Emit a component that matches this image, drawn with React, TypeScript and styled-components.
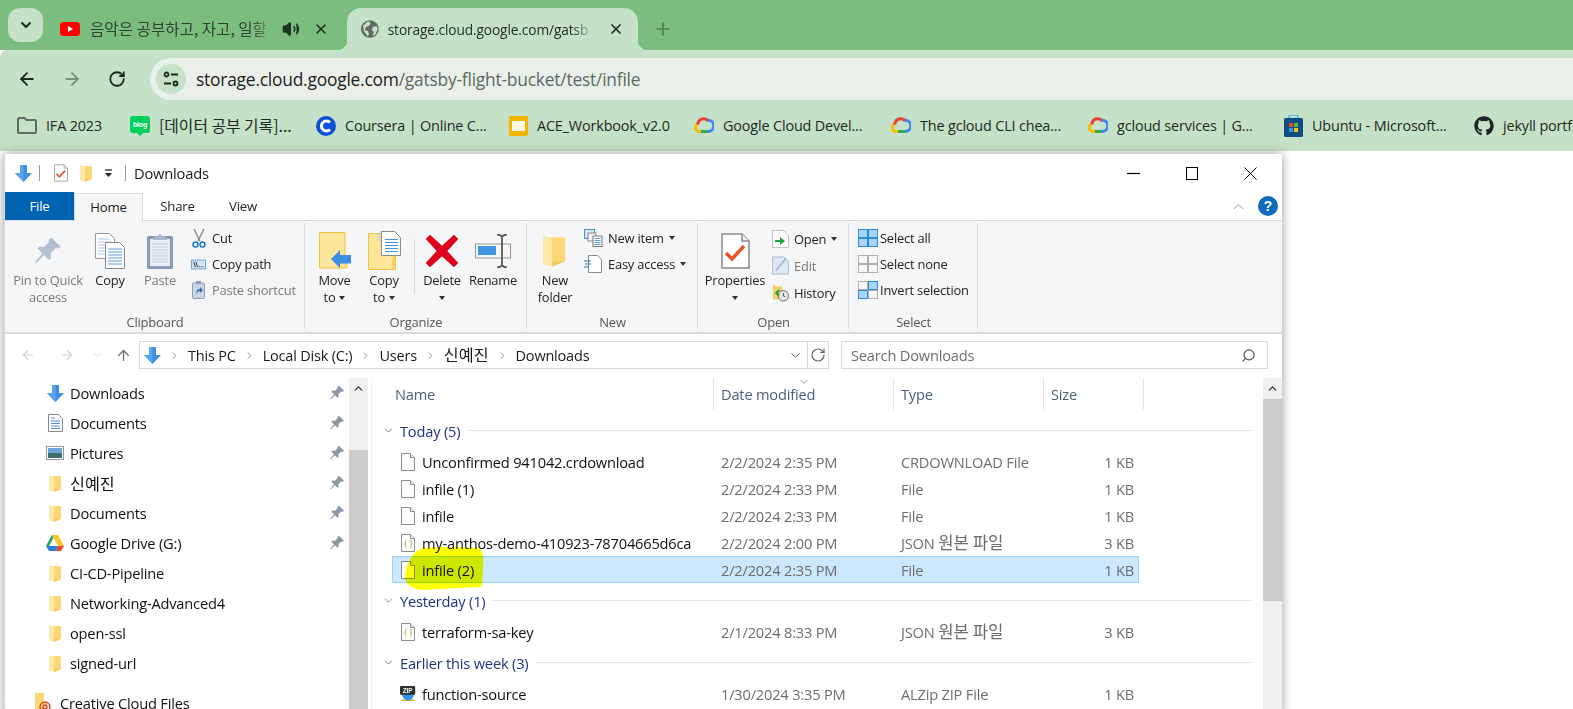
import React from "react";
import styled, { createGlobalStyle } from "styled-components";
import { ArrowLeft, ArrowRight, RotateCw, X, Plus, ChevronDown, ChevronUp, ChevronRight, ArrowUp, Volume2, Search } from "lucide-react";
import { FaGithub } from "react-icons/fa";

const UI = `"Open Sans", "Noto Sans CJK KR", sans-serif`;

const Global = createGlobalStyle`
  html, body { margin: 0; padding: 0; background: #fff; }
  body { font-family: ${UI}; overflow: hidden; }
  * { box-sizing: border-box; }
`;

const Page = styled.div`
  width: 1573px;
  height: 709px;
  overflow: hidden;
  background: #fff;
`;

const Cjk = styled.span<{ $size?: number }>`
  font-family: "Noto Sans CJK KR", sans-serif;
  font-size: ${(p) => p.$size ?? 16}px;
  letter-spacing: 0;
  line-height: 1;
`;

/* ---------- browser chrome ---------- */
const TabStrip = styled.div`
  height: 50px;
  background: #7bbc7f;
  display: flex;
  align-items: flex-end;
  padding-left: 8px;
`;
const TabSearch = styled.div`
  width: 35px;
  height: 34px;
  margin-bottom: 8px;
  background: #c5e1c7;
  border-radius: 12px;
  display: flex;
  align-items: center;
  justify-content: center;
  color: #1c2a1d;
`;
const InactiveTab = styled.div`
  width: 304px;
  height: 42px;
  padding: 0 18px 0 17px;
  display: flex;
  align-items: center;
  color: #1f3421;
`;
const ActiveTab = styled.div`
  position: relative;
  width: 291px;
  height: 42px;
  padding: 0 14px;
  display: flex;
  align-items: center;
  background: #c5e1c7;
  border-radius: 14px 14px 0 0;
  color: #1f2b20;
  &::before, &::after {
    content: "";
    position: absolute;
    bottom: 0;
    width: 10px;
    height: 10px;
  }
  &::before { left: -10px; background: radial-gradient(circle at 0 0, transparent 10px, #c5e1c7 10.5px); }
  &::after { right: -10px; background: radial-gradient(circle at 100% 0, transparent 10px, #c5e1c7 10.5px); }
`;
const TabTitle = styled.span<{ $w: number; $ml: number; $dim?: boolean }>`
  width: ${(p) => p.$w}px;
  margin-left: ${(p) => p.$ml}px;
  overflow: hidden;
  white-space: nowrap;
  font-size: 13.7px;
  letter-spacing: -0.1px;
  color: ${(p) => (p.$dim ? "#2f4331" : "#1f2b20")};
  -webkit-mask-image: linear-gradient(to right, #000 88%, transparent);
  mask-image: linear-gradient(to right, #000 88%, transparent);
`;
const TabAction = styled.span<{ $ml: number }>`
  display: flex;
  margin-left: ${(p) => p.$ml}px;
`;
const NewTab = styled.span`
  height: 42px;
  margin-left: 15px;
  display: flex;
  align-items: center;
  color: #4f7d52;
`;
const Toolbar = styled.div`
  position: relative;
  height: 50px;
  background: #c5e1c7;
  border-radius: 8px 0 0 0;
  display: flex;
  padding-top: 8px;
`;
const ToolButton = styled.span<{ $w: number; $dim?: boolean }>`
  width: ${(p) => p.$w}px;
  height: 42px;
  display: flex;
  align-items: center;
  justify-content: center;
  color: ${(p) => (p.$dim ? "#7d917e" : "#1c2a1d")};
`;
const Omnibox = styled.div`
  flex: 1;
  height: 42px;
  margin-left: 6px;
  background: #e9f0e9;
  border-radius: 21px 0 0 21px;
  display: flex;
  align-items: center;
  padding-left: 6px;
`;
const TuneChip = styled.span`
  width: 30px;
  height: 30px;
  border-radius: 50%;
  background: #c5e1c7;
  display: flex;
  align-items: center;
  justify-content: center;
`;
const Url = styled.span`
  margin-left: 10px;
  font-size: 17.4px;
  letter-spacing: -0.22px;
  color: #5c6b5d;
  white-space: nowrap;
`;
const UrlHost = styled.span`
  color: #1a241b;
`;
const BookmarkBar = styled.div`
  height: 51px;
  background: #c5e1c7;
  display: flex;
  align-items: center;
  padding-left: 17px;
  overflow: hidden;
`;
const Bookmark = styled.div<{ $w: number }>`
  flex: 0 0 ${(p) => p.$w}px;
  display: flex;
  align-items: center;
  gap: 9px;
  font-size: 14.4px;
  letter-spacing: -0.15px;
  color: #1c2a1d;
  white-space: nowrap;
`;
const BookmarkIcon = styled.span`
  flex: 0 0 20px;
  height: 20px;
  display: flex;
  align-items: center;
  justify-content: center;
`;

/* ---------- explorer window ---------- */
const Window = styled.div`
  position: relative;
  z-index: 1;
  margin: 3px 0 0 4px;
  width: 1278px;
  height: 560px;
  background: #fff;
  border-left: 1px solid #dcdcdc;
  box-shadow: 0 0 10px rgba(0, 0, 0, 0.4);
  display: flex;
  flex-direction: column;
  font-size: 14.65px;
  letter-spacing: -0.2px;
`;
const TitleBar = styled.div`
  height: 38px;
  display: flex;
  align-items: center;
  padding-left: 10px;
`;
const TitleSlot = styled.span<{ $w: number }>`
  flex: 0 0 ${(p) => p.$w}px;
  display: flex;
  align-items: center;
`;
const TitleSep = styled.span<{ $ml: number; $mr: number }>`
  width: 1px;
  height: 16px;
  background: #9a9a9a;
  margin: 0 ${(p) => p.$mr}px 0 ${(p) => p.$ml}px;
`;
const TitleText = styled.span`
  font-size: 14.7px;
  color: #1a1a1a;
`;
const WindowControls = styled.div`
  margin-left: auto;
  display: flex;
  align-items: center;
  padding-right: 25px;
  gap: 46px;
`;
const TabRow = styled.div`
  height: 28px;
  display: flex;
  align-items: stretch;
  position: relative;
`;
const FileTab = styled.div`
  width: 69px;
  background: #0063b1;
  color: #fff;
  display: flex;
  align-items: center;
  justify-content: center;
  font-size: 13.2px;
`;
const RibbonTab = styled.div<{ $active?: boolean; $w: number }>`
  width: ${(p) => p.$w}px;
  padding-bottom: 2px;
  display: flex;
  align-items: center;
  justify-content: center;
  font-size: 13.2px;
  color: #222;
  background: ${(p) => (p.$active ? "#f5f6f7" : "transparent")};
  border: 1px solid ${(p) => (p.$active ? "#dadbdc" : "transparent")};
  border-bottom: none;
  position: relative;
  top: ${(p) => (p.$active ? "1px" : "0")};
`;
const RibbonHelp = styled.div`
  margin-left: auto;
  display: flex;
  align-items: center;
  gap: 11px;
  padding-right: 4px;
`;
const Ribbon = styled.div`
  height: 114px;
  background: #f5f6f7;
  border-top: 1px solid #dadbdc;
  border-bottom: 2px solid #dadbdc;
  display: flex;
`;
const Group = styled.div<{ $w: number }>`
  width: ${(p) => p.$w}px;
  display: flex;
  flex-direction: column;
  position: relative;
  &::after {
    content: "";
    position: absolute;
    right: 0;
    top: 2px;
    bottom: 3px;
    width: 1px;
    background: #dadbdc;
  }
`;
const GroupBody = styled.div`
  flex: 1;
  display: flex;
`;
const GroupLabel = styled.div`
  height: 22px;
  line-height: 24px;
  text-align: center;
  font-size: 13px;
  color: #575757;
`;
const LargeButton = styled.div<{ $w: number; $dim?: boolean }>`
  width: ${(p) => p.$w}px;
  padding-top: 8px;
  display: flex;
  flex-direction: column;
  align-items: center;
  font-size: 12.9px;
  color: ${(p) => (p.$dim ? "#7a7a7a" : "#222")};
`;
const LargeIcon = styled.div`
  height: 43px;
  display: flex;
  align-items: center;
  justify-content: center;
`;
const LargeLine = styled.div`
  height: 17px;
  line-height: 17px;
  white-space: nowrap;
  display: flex;
  align-items: center;
  gap: 4px;
`;
const Caret = styled.span`
  display: inline-block;
  width: 0;
  height: 0;
  border-left: 3.5px solid transparent;
  border-right: 3.5px solid transparent;
  border-top: 4px solid #333;
`;
const GroupDivider = styled.div`
  width: 1px;
  margin: 18px 0 16px 10px;
  background: #dadbdc;
`;
const SmallColumn = styled.div<{ $pl?: number }>`
  padding: 4px 0 0 ${(p) => p.$pl ?? 0}px;
  display: flex;
  flex-direction: column;
`;
const SmallRow = styled.div<{ $h?: number; $dim?: boolean; $gap?: number }>`
  height: ${(p) => p.$h ?? 26}px;
  display: flex;
  align-items: center;
  gap: ${(p) => p.$gap ?? 5}px;
  font-size: 12.9px;
  white-space: nowrap;
  color: ${(p) => (p.$dim ? "#7a7a7a" : "#222")};
`;
const SmallIcon = styled.span<{ $w: number }>`
  flex: 0 0 ${(p) => p.$w}px;
  min-width: 0;
  display: flex;
  justify-content: center;
  align-items: center;
`;

/* ---------- address row ---------- */
const AddressRow = styled.div`
  height: 44px;
  flex: none;
  padding-top: 7px;
  display: flex;
  align-items: flex-start;
`;
const NavArrow = styled.span<{ $w: number; $color: string }>`
  width: ${(p) => p.$w}px;
  height: 28px;
  display: flex;
  align-items: center;
  justify-content: center;
  color: ${(p) => p.$color};
`;
const AddressBox = styled.div`
  width: 690px;
  height: 28px;
  margin-left: 4px;
  border: 1px solid #d9d9d9;
  display: flex;
  align-items: center;
  padding-left: 4px;
  gap: 8px;
  font-size: 14.5px;
  color: #1a1a1a;
`;
const AddressEnd = styled.div`
  margin-left: auto;
  display: flex;
  align-items: center;
  height: 100%;
  color: #666;
`;
const RefreshSlot = styled.span`
  width: 21px;
  height: 100%;
  margin-left: 4px;
  border-left: 1px solid #d9d9d9;
  display: flex;
  align-items: center;
  justify-content: center;
`;
const SearchBox = styled.div`
  width: 427px;
  height: 28px;
  margin-left: 12px;
  border: 1px solid #d9d9d9;
  display: flex;
  align-items: center;
  justify-content: space-between;
  padding: 0 11px 0 9px;
  font-size: 14.65px;
  color: #6d6d6d;
`;

/* ---------- main ---------- */
const Main = styled.div`
  flex: 1;
  display: flex;
  min-height: 0;
`;
const NavPane = styled.div`
  width: 344px;
  display: flex;
  flex-direction: column;
`;
const NavRow = styled.div<{ $outer?: boolean }>`
  flex: none;
  height: 30px;
  margin-top: ${(p) => (p.$outer ? "10px" : "0")};
  padding-left: ${(p) => (p.$outer ? "29px" : "38px")};
  display: flex;
  align-items: center;
  color: #111;
  white-space: nowrap;
`;
const NavIcon = styled.span<{ $outer?: boolean }>`
  flex: 0 0 ${(p) => (p.$outer ? "20px" : "24px")};
  margin-right: ${(p) => (p.$outer ? "6px" : "3px")};
  display: flex;
  align-items: center;
  justify-content: center;
`;
const PinSlot = styled.span`
  margin-left: auto;
  flex: 0 0 19px;
  display: flex;
`;
const Scrollbar = styled.div<{ $thumbTop: number; $thumbH: number }>`
  position: relative;
  flex: none;
  width: 19px;
  background: #f0f0f0;
  display: flex;
  justify-content: center;
  padding-top: 4px;
  color: #333;
  &::after {
    content: "";
    position: absolute;
    left: 0;
    right: 0;
    top: ${(p) => p.$thumbTop}px;
    height: ${(p) => p.$thumbH}px;
    background: #cdcdcd;
  }
`;
const ListPane = styled.div`
  position: relative;
  flex: 1;
  margin-left: 3px;
  border-left: 1px solid #f0f0f0;
`;
const HeaderRow = styled.div`
  height: 32px;
  display: flex;
`;
const HeaderCell = styled.div<{ $w: number; $pl: number }>`
  position: relative;
  width: ${(p) => p.$w}px;
  padding-left: ${(p) => p.$pl}px;
  border-right: 1px solid #e5e5e5;
  display: flex;
  align-items: center;
  color: #4c607a;
`;
const SortChevron = styled.span`
  position: absolute;
  left: 84px;
  top: -2px;
  display: flex;
  color: #777;
`;
const Groups = styled.div`
  padding-top: 3px;
`;
const GroupHeader = styled.div`
  height: 30px;
  margin: 2.5px 0 2.5px 10px;
  width: 869px;
  display: flex;
  align-items: center;
  color: #1e3287;
`;
const GroupChevron = styled.span`
  flex: 0 0 18px;
  display: flex;
  color: #666;
`;
const GroupRule = styled.span`
  flex: 1;
  height: 1px;
  margin-left: 8px;
  background: #e3e3e3;
`;
const FileRow = styled.div<{ $selected?: boolean }>`
  height: 27px;
  margin-left: 20px;
  width: 747px;
  display: grid;
  grid-template-columns: 328px 180px 140px 97px;
  align-items: center;
  background: ${(p) => (p.$selected ? "#cce8ff" : "transparent")};
  border: 1px solid ${(p) => (p.$selected ? "#99d1ff" : "transparent")};
`;
const NameCell = styled.div`
  display: flex;
  align-items: center;
  color: #111;
  white-space: nowrap;
`;
const FileIconSlot = styled.span`
  flex: 0 0 16px;
  min-width: 0;
  margin: 0 6px 0 7px;
  display: flex;
  justify-content: center;
`;
const MutedCell = styled.div`
  color: #6d6d6d;
  white-space: nowrap;
`;
const SizeCell = styled(MutedCell)`
  text-align: right;
  padding-right: 4px;
`;
const Highlight = styled.svg`
  position: absolute;
  left: 33px;
  top: 169px;
  mix-blend-mode: multiply;
  pointer-events: none;
`;

/* ---------- drawn icons ---------- */
const BlueDown = ({ s = 17 }: { s?: number }) => (
  <svg width={s} height={s} viewBox="0 0 17 17">
    <path d="M5 0h7v8h5l-8.5 9L0 8h5z" fill="#3a8fe3" />
    <path d="M5 0h3.500v17L0 8h5z" fill="#5aa6ee" />
  </svg>
);
const QuickFolder = ({ s = 13, h = 17 }: { s?: number; h?: number }) => (
  <svg width={s} height={h} viewBox="0 0 13 17">
    <path d="M4 1h7l1 1v12H4z" fill="#fcd778" />
    <path d="M0 0l5 2v15l-5-1.500z" fill="#fde9a9" />
    <path d="M5 2v15l7-3H5" fill="#f5c553" />
  </svg>
);
const CheckDoc = ({ w = 14, h = 18 }: { w?: number; h?: number }) => (
  <svg width={w} height={h} viewBox="0 0 29 36">
    <path d="M1 1h20l7 7v27H1z" fill="#fff" stroke="#8a8a8a" strokeWidth="1.500" />
    <path d="M21 1v7h7" fill="#eee" stroke="#8a8a8a" strokeWidth="1.500" />
    <path d="M5 20l6 6L23 13" fill="none" stroke="#e8562a" strokeWidth="3.500" />
  </svg>
);
const Page14 = () => (
  <svg width="14" height="18" viewBox="0 0 14 18">
    <path d="M.5.500h9l4 4v13H.5z" fill="#fdfdfd" stroke="#8d8d8d" />
    <path d="M9.500.5v4h4" fill="#f0f0f0" stroke="#8d8d8d" />
  </svg>
);
const JsonPage = () => (
  <svg width="14" height="18" viewBox="0 0 14 18">
    <path d="M.5.500h9l4 4v13H.5z" fill="#fdfdfd" stroke="#8d8d8d" />
    <path d="M9.500.5v4h4" fill="#f0f0f0" stroke="#8d8d8d" />
    <path d="M5.500 6C4 6 4.500 8 4.500 9S4 10 3.500 10C4 10 4.500 10 4.500 11s-.5 2.500 1 2.500M9 6c1.500 0 1 2 1 3s.5 1 1 1c-.5 0-1 0-1 1s.5 2.500-1 2.500" fill="none" stroke="#b3b552" strokeWidth="1" />
  </svg>
);
const ZipIcon = () => (
  <svg width="20" height="19" viewBox="0 0 20 19">
    <path d="M3 17l-2 2h18l-2-2z" fill="#d9a93a" />
    <path d="M2.500 9C2.500 14 5 18 10 18s7.500-4 7.500-9z" fill="#2f8fe6" />
    <rect x="0" y="0" width="19" height="11" rx="1.500" fill="#303030" />
    <text x="9.500" y="8.500" fontSize="8" fontWeight="700" textAnchor="middle" fill="#fff" fontFamily="Liberation Sans, sans-serif">ZIP</text>
  </svg>
);
const Pin = ({ s = 15, c = "#8c97a6" }: { s?: number; c?: string }) => (
  <svg width={s} height={s} viewBox="0 0 26 26">
    <path d="M17 0l9 9-2.500 1.500-2.500-.5-5.500 5.500.5 4.500-2 2-5-5L1 25l-1-1 7.500-8.500-5-5 2-2 4.500.5L14 4l-.5-2.500z" fill={c} />
  </svg>
);
const Copy2 = () => (
  <svg width="30" height="36" viewBox="0 0 30 36">
    <path d="M.5.500h14l5 5v20H.5z" fill="#fff" stroke="#9a9a9a" />
    <path d="M3 6h11M3 9h13M3 12h13M3 15h13M3 18h13M3 21h13" stroke="#a8c8ee" />
    <path d="M10.500 9.500h14l5 5v21h-19z" fill="#fff" stroke="#8a8a8a" />
    <path d="M13 16h14M13 19h14M13 22h14M13 25h14M13 28h14M13 31h14" stroke="#5a9ae0" />
  </svg>
);
const Clipboard = () => (
  <svg width="26" height="37" viewBox="0 0 26 37">
    <rect x="0" y="4" width="26" height="33" rx="1.500" fill="#8b9cba" />
    <rect x="3" y="7" width="20" height="27" fill="#e9eef6" />
    <path d="M5 12h16M5 15h16M5 18h16M5 21h16M5 24h16M5 27h16M5 30h16" stroke="#c3cfe2" />
    <path d="M6 7l3-3h2.500a1.500 2 0 0 1 3 0H17l3 3v1H6z" fill="#aab6c9" />
  </svg>
);
const Scissors = () => (
  <svg width="14" height="19" viewBox="0 0 14 19">
    <path d="M2 0l6 12M12 0L6 12" stroke="#8a8a8a" strokeWidth="1.400" fill="none" />
    <circle cx="3.500" cy="15.500" r="2.500" fill="none" stroke="#1e78c8" strokeWidth="1.500" />
    <circle cx="10.500" cy="15.500" r="2.500" fill="none" stroke="#1e78c8" strokeWidth="1.500" />
  </svg>
);
const CopyPath = () => (
  <svg width="17" height="11" viewBox="0 0 17 11">
    <rect x="0.500" y="0.500" width="16" height="10" fill="#cfe3f7" stroke="#6f9bc9" />
    <path d="M3 2.500l2 6M5.500 2.500l2 6" stroke="#222" fill="none" />
    <path d="M9 8h1M11 8h1M13 8h1" stroke="#222" />
  </svg>
);
const PasteShortcut = () => (
  <svg width="13" height="18" viewBox="0 0 13 18">
    <rect x="0.500" y="2" width="12" height="15.500" rx="1" fill="#c9d4e4" stroke="#8d9db8" />
    <path d="M4 0h5v3H4z" fill="#8d9db8" />
    <path d="M4 13c0-4 2-5 4-5V6l3 3-3 3v-2c-2 0-3 1-4 3z" fill="#3b6fb0" />
  </svg>
);
const MoveTo = () => (
  <svg width="32" height="37" viewBox="0 0 32 37">
    <path d="M.5.500h25.500v35.500H.5z" fill="#fde59a" stroke="#efc33f" />
    <path d="M26 30h2v6h-2" fill="#fde59a" stroke="#efc33f" />
    <path d="M12 27l9-9v5h11v8.500H21V36z" fill="#3a8fe3" />
  </svg>
);
const CopyTo = () => (
  <svg width="33" height="39" viewBox="0 0 33 39">
    <path d="M.5 2.500h21v10l6 10v16H.5z" fill="#fde59a" stroke="#efc33f" />
    <path d="M25 38.500V28c0-1 2.500-4 2.500-4v14.500" fill="#fbd570" stroke="#efc33f" />
    <path d="M13.500.5h13l6 6v18h-19z" fill="#fff" stroke="#8a8a8a" />
    <path d="M9 3h4M9 6h4M9 9h4" stroke="#a8c8ee" />
    <path d="M17 8.500h13M17 11.500h13M17 14.500h13M17 17.500h13M17 20.500h13" stroke="#4a8fdc" />
  </svg>
);
const DeleteX = () => (
  <svg width="32" height="32" viewBox="0 0 32 32">
    <path d="M4 0l12 11L28 0l4 4-11 12 11 12-4 4-12-11L4 32l-4-4 11-12L0 4z" fill="#e3001b" stroke="#b5001a" strokeWidth="0.500" />
  </svg>
);
const RenameIcon = () => (
  <svg width="36" height="34" viewBox="0 0 36 34">
    <rect x="0.500" y="10" width="35" height="14" fill="#f5f6f7" stroke="#9a9a9a" />
    <rect x="3" y="12" width="18" height="9" fill="#3f95e0" />
    <path d="M22 .5c3 0 4 1 5 2 1-1 2-2 5-2M27 2v30M22 33.500c3 0 4-1 5-2 1 1 2 2 5 2" fill="none" stroke="#5c5c5c" strokeWidth="1.800" />
  </svg>
);
const NewItemIcon = () => (
  <svg width="19" height="18" viewBox="0 0 19 18">
    <rect x="0.500" y="0.500" width="10" height="9" fill="#d9e8f7" stroke="#5e8bbf" />
    <rect x="4" y="4" width="8" height="8" fill="#f4f4f4" stroke="#888" />
    <rect x="9" y="7" width="9" height="10.500" fill="#fff" stroke="#7a7a7a" />
    <path d="M10.500 9.500h6M10.500 11.500h6M10.500 13.500h6M10.500 15.500h6" stroke="#5a9ae0" />
  </svg>
);
const EasyAccess = () => (
  <svg width="18" height="18" viewBox="0 0 18 18">
    <path d="M4.500.5h9l4 4v13h-13z" fill="#fff" stroke="#8a8a8a" />
    <path d="M0 6h7M1 9h6M0 12h5" stroke="#1e78c8" strokeWidth="1.200" />
  </svg>
);
const OpenIcon = () => (
  <svg width="17" height="18" viewBox="0 0 17 18">
    <path d="M.5.500h11l5 5v12H.5z" fill="#fbfbfb" stroke="#c3c3c3" />
    <path d="M3 10h5V7l5 4-5 4v-3H3z" fill="#1fa33a" />
  </svg>
);
const EditIcon = () => (
  <svg width="18" height="19" viewBox="0 0 18 19">
    <path d="M.5.500h12l5 5v13H.5z" fill="#dfe8f3" stroke="#a8bad0" />
    <path d="M4 15L15 2" stroke="#a8bad0" strokeWidth="2" />
  </svg>
);
const HistoryIcon = () => (
  <svg width="18" height="18" viewBox="0 0 18 18">
    <path d="M1 0l4 2h6v14H1z" fill="#f5cf6b" />
    <circle cx="12" cy="12" r="5.500" fill="#e8e8e8" stroke="#666" />
    <path d="M12 9v3l2 1" stroke="#444" fill="none" />
    <path d="M7.500 6l-3 3 3 3" fill="none" stroke="#1f9a33" strokeWidth="2" />
  </svg>
);
const GridIcon = ({ mode }: { mode: "all" | "none" | "invert" }) => {
  const tone = (on: boolean) =>
    on ? { fill: "#a9d3f7", stroke: "#2b8be0" } : { fill: "#f5f6f7", stroke: "#b0b0b0" };
  const on = mode === "all" ? [1, 1, 1, 1] : mode === "none" ? [0, 0, 0, 0] : [0, 1, 1, 0];
  return (
    <svg width="20" height="18" viewBox="0 0 20 18">
      <rect x="0.500" y="0.500" width="9" height="8" {...tone(!!on[0])} />
      <rect x="10.500" y="0.500" width="9" height="8" {...tone(!!on[1])} />
      <rect x="0.500" y="9.500" width="9" height="8" {...tone(!!on[2])} />
      <rect x="10.500" y="9.500" width="9" height="8" {...tone(!!on[3])} />
    </svg>
  );
};
const HelpBadge = () => (
  <svg width="20" height="20" viewBox="0 0 20 20">
    <circle cx="10" cy="10" r="10" fill="#0f6cbd" />
    <text x="10" y="15" fontSize="14" fontWeight="700" textAnchor="middle" fill="#fff" fontFamily="Liberation Sans, sans-serif">?</text>
  </svg>
);
const DocsIcon = () => (
  <svg width="15" height="18" viewBox="0 0 15 18">
    <path d="M.5.500h10l4 4v13H.5z" fill="#fff" stroke="#888" />
    <path d="M3 4h4M3 7h9M3 9.500h9M3 12h9M3 14.500h9" stroke="#4a8fdc" />
  </svg>
);
const PicturesIcon = () => (
  <svg width="18" height="14" viewBox="0 0 18 14">
    <rect x="0.500" y="0.500" width="17" height="13" fill="#fff" stroke="#999" />
    <rect x="2" y="2" width="14" height="5" fill="#6ea8d8" />
    <rect x="2" y="7" width="14" height="5" fill="#3f6f6a" />
  </svg>
);
const DriveIcon = () => (
  <svg width="18" height="16" viewBox="0 0 18 16">
    <path d="M6 0h3l-6 11-3 0z" fill="#1fa463" />
    <path d="M6 0h6l6 11h-6z" fill="#ffc425" />
    <path d="M0 11h12l-2 5H3z" fill="#2a7de1" />
    <path d="M12 11h6l-3 5h-5z" fill="#ea4335" />
  </svg>
);
const CreativeCloud = () => (
  <svg width="18" height="20" viewBox="0 0 18 20">
    <path d="M0 0h9v9H12v10H0z" fill="#fbd877" />
    <circle cx="10" cy="14" r="5" fill="none" stroke="#e5432d" strokeWidth="1.400" />
    <circle cx="10" cy="14" r="2" fill="none" stroke="#e5432d" strokeWidth="1.400" />
  </svg>
);
const Youtube = () => (
  <svg width="20" height="14" viewBox="0 0 20 14">
    <rect width="20" height="14" rx="3.500" fill="#f00" />
    <path d="M8 4l5 3-5 3z" fill="#fff" />
  </svg>
);
const Globe = () => (
  <svg width="18" height="18" viewBox="0 0 18 18">
    <circle cx="9" cy="9" r="9" fill="#5f6b63" />
    <path d="M7 1l3 2-2 3-3 1-1 3 3 1 1 3-1 3-4-6-1-5zM12 7l4-1 1 3-2 5-3 2 1-4-2-2z" fill="#c5e1c7" />
  </svg>
);
const TuneIcon = () => (
  <svg width="16" height="16" viewBox="0 0 16 16" fill="none" stroke="#1c2a1d" strokeWidth="1.800">
    <circle cx="3.500" cy="3.500" r="2" />
    <path d="M8 3.500h7M1 12.500h7" />
    <circle cx="12.500" cy="12.500" r="2" />
  </svg>
);
const FolderOutline = () => (
  <svg width="20" height="17" viewBox="0 0 20 17" fill="none" stroke="#5f6b63" strokeWidth="2">
    <path d="M1 2.500A1.500 1.500 0 0 1 2.500 1h5l2 2h8A1.500 1.500 0 0 1 19 4.500V15a1 1 0 0 1-1 1H2a1 1 0 0 1-1-1z" />
  </svg>
);
const BlogIcon = () => (
  <svg width="20" height="20" viewBox="0 0 20 20">
    <path d="M3 0h14a3 3 0 0 1 3 3v11a3 3 0 0 1-3 3h-4l-3 3-3-3H3a3 3 0 0 1-3-3V3a3 3 0 0 1 3-3z" fill="#03cf5d" />
    <text x="10" y="11" fontSize="7" fontWeight="700" textAnchor="middle" fill="#fff" fontFamily="Liberation Sans, sans-serif">blog</text>
  </svg>
);
const CourseraIcon = () => (
  <svg width="20" height="20" viewBox="0 0 20 20">
    <circle cx="10" cy="10" r="10" fill="#0b4fd6" />
    <path d="M14 6.500A5 5 0 1 0 14 13.500" fill="none" stroke="#fff" strokeWidth="3" />
  </svg>
);
const SlidesIcon = () => (
  <svg width="19" height="20" viewBox="0 0 19 20">
    <rect width="19" height="20" rx="2" fill="#f5b400" />
    <rect x="3" y="5" width="13" height="10" fill="#fdf7e3" />
  </svg>
);
const GCloud = () => (
  <svg width="20" height="17" viewBox="0 0 20 17" fill="none" strokeWidth="3">
    <path d="M8 14.500H5.500A4 4 0 0 1 4.500 6.600" stroke="#fbbc04" />
    <path d="M3.800 7.500A6 6 0 0 1 14.500 4" stroke="#ea4335" />
    <path d="M13.800 3.300A5.500 5.500 0 0 1 14.500 14.500H13" stroke="#4285f4" />
    <path d="M7 14.500h7" stroke="#34a853" />
  </svg>
);
const StoreIcon = () => (
  <svg width="19" height="22" viewBox="0 0 19 22">
    <path d="M5 4V2a2 2 0 0 1 2-2h5a2 2 0 0 1 2 2v2" fill="none" stroke="#4fb3e8" strokeWidth="1.500" />
    <rect y="3" width="19" height="19" rx="1.500" fill="#0f4c81" />
    <rect x="5" y="8" width="4" height="4" fill="#e5492d" />
    <rect x="10" y="8" width="4" height="4" fill="#5fb832" />
    <rect x="5" y="13" width="4" height="4" fill="#2b9be0" />
    <rect x="10" y="13" width="4" height="4" fill="#fbbc04" />
  </svg>
);
const TinyCaretLines = () => (
  <svg width="9" height="9" viewBox="0 0 9 9">
    <path d="M1 1h7" stroke="#222" strokeWidth="1.200" />
    <path d="M1 4h7L4.500 8z" fill="#222" />
  </svg>
);
const MinGlyph = () => (
  <svg width="13" height="13" viewBox="0 0 13 13"><path d="M0 6.500h13" stroke="#000" strokeWidth="1.200" /></svg>
);
const MaxGlyph = () => (
  <svg width="12" height="13" viewBox="0 0 12 13"><rect x="0.500" y="0.500" width="11" height="12" fill="none" stroke="#000" /></svg>
);
const CloseGlyph = () => (
  <svg width="13" height="13" viewBox="0 0 13 13"><path d="M.5.500l12 12M12.500.5l-12 12" stroke="#000" /></svg>
);

const bookmarks: { w: number; icon: React.ReactNode; label: React.ReactNode; id: string }[] = [
  { id: "a", w: 113, icon: <FolderOutline />, label: "IFA 2023" },
  { id: "b", w: 186, icon: <BlogIcon />, label: <Cjk $size={15.8}>[데이터 공부 기록]...</Cjk> },
  { id: "c", w: 192, icon: <CourseraIcon />, label: "Coursera | Online C..." },
  { id: "d", w: 186, icon: <SlidesIcon />, label: "ACE_Workbook_v2.0" },
  { id: "e", w: 197, icon: <GCloud />, label: "Google Cloud Devel..." },
  { id: "f", w: 197, icon: <GCloud />, label: "The gcloud CLI chea..." },
  { id: "g", w: 195, icon: <GCloud />, label: "gcloud services  |  G..." },
  { id: "h", w: 191, icon: <StoreIcon />, label: "Ubuntu - Microsoft..." },
  { id: "i", w: 90, icon: <FaGithub size={20} color="#1c2328" />, label: "jekyll portf" },
];

const navItems: { label: React.ReactNode; icon: React.ReactNode; pin?: boolean }[] = [
  { label: "Downloads", icon: <BlueDown />, pin: true },
  { label: "Documents", icon: <DocsIcon />, pin: true },
  { label: "Pictures", icon: <PicturesIcon />, pin: true },
  { label: <Cjk $size={16.2}>신예진</Cjk>, icon: <QuickFolder />, pin: true },
  { label: "Documents", icon: <QuickFolder />, pin: true },
  { label: "Google Drive (G:)", icon: <DriveIcon />, pin: true },
  { label: "CI-CD-Pipeline", icon: <QuickFolder /> },
  { label: "Networking-Advanced4", icon: <QuickFolder /> },
  { label: "open-ssl", icon: <QuickFolder /> },
  { label: "signed-url", icon: <QuickFolder /> },
];

const jsonType = <>JSON <Cjk $size={16.7}>원본 파일</Cjk></>;

type FileItem = { name: string; date: string; type: React.ReactNode; size: string; icon: React.ReactNode; selected?: boolean };
const fileGroups: { title: string; files: FileItem[] }[] = [
  {
    title: "Today (5)",
    files: [
      { name: "Unconfirmed 941042.crdownload", date: "2/2/2024 2:35 PM", type: "CRDOWNLOAD File", size: "1 KB", icon: <Page14 /> },
      { name: "infile (1)", date: "2/2/2024 2:33 PM", type: "File", size: "1 KB", icon: <Page14 /> },
      { name: "infile", date: "2/2/2024 2:33 PM", type: "File", size: "1 KB", icon: <Page14 /> },
      { name: "my-anthos-demo-410923-78704665d6ca", date: "2/2/2024 2:00 PM", type: jsonType, size: "3 KB", icon: <JsonPage /> },
      { name: "infile (2)", date: "2/2/2024 2:35 PM", type: "File", size: "1 KB", icon: <Page14 />, selected: true },
    ],
  },
  {
    title: "Yesterday (1)",
    files: [{ name: "terraform-sa-key", date: "2/1/2024 8:33 PM", type: jsonType, size: "3 KB", icon: <JsonPage /> }],
  },
  {
    title: "Earlier this week (3)",
    files: [{ name: "function-source", date: "1/30/2024 3:35 PM", type: "ALZip ZIP File", size: "1 KB", icon: <ZipIcon /> }],
  },
];

const crumbs: { id: string; text: React.ReactNode }[] = [
  { id: "pc", text: "This PC" },
  { id: "disk", text: "Local Disk (C:)" },
  { id: "users", text: "Users" },
  { id: "me", text: <Cjk $size={16.2}>신예진</Cjk> },
  { id: "dl", text: "Downloads" },
];

export default function App() {
  return (
    <Page>
      <Global />
      <TabStrip>
        <TabSearch><ChevronDown size={16} strokeWidth={3} /></TabSearch>
        <InactiveTab>
          <Youtube />
          <TabTitle $w={184} $ml={10} $dim><Cjk $size={15.6}>음악은 공부하고, 자고, 일할</Cjk></TabTitle>
          <TabAction $ml={8}><Volume2 size={18} fill="currentColor" /></TabAction>
          <TabAction $ml={13}><X size={16} strokeWidth={2.4} /></TabAction>
        </InactiveTab>
        <ActiveTab>
          <Globe />
          <TabTitle $w={212} $ml={9}>storage.cloud.google.com/gatsb</TabTitle>
          <TabAction $ml={12}><X size={16} strokeWidth={2.6} /></TabAction>
        </ActiveTab>
        <NewTab><Plus size={20} strokeWidth={2} /></NewTab>
      </TabStrip>
      <Toolbar>
        <ToolButton $w={54}><ArrowLeft size={20} strokeWidth={2.2} /></ToolButton>
        <ToolButton $w={36} $dim><ArrowRight size={20} strokeWidth={2.2} /></ToolButton>
        <ToolButton $w={54}><RotateCw size={18} strokeWidth={2.4} /></ToolButton>
        <Omnibox>
          <TuneChip><TuneIcon /></TuneChip>
          <Url><UrlHost>storage.cloud.google.com</UrlHost>/gatsby-flight-bucket/test/infile</Url>
        </Omnibox>
      </Toolbar>
      <BookmarkBar>
        {bookmarks.map((b) => (
          <Bookmark key={b.id} $w={b.w}><BookmarkIcon>{b.icon}</BookmarkIcon>{b.label}</Bookmark>
        ))}
      </BookmarkBar>

      <Window>
        <TitleBar>
          <TitleSlot $w={17}><BlueDown /></TitleSlot>
          <TitleSep $ml={7} $mr={14} />
          <TitleSlot $w={26}><CheckDoc /></TitleSlot>
          <TitleSlot $w={24}><QuickFolder /></TitleSlot>
          <TitleSlot $w={21}><TinyCaretLines /></TitleSlot>
          <TitleSep $ml={0} $mr={8} />
          <TitleText>Downloads</TitleText>
          <WindowControls>
            <MinGlyph />
            <MaxGlyph />
            <CloseGlyph />
          </WindowControls>
        </TitleBar>
        <TabRow>
          <FileTab>File</FileTab>
          <RibbonTab $active $w={69}>Home</RibbonTab>
          <RibbonTab $w={69}>Share</RibbonTab>
          <RibbonTab $w={62}>View</RibbonTab>
          <RibbonHelp>
            <ChevronUp size={17} color="#9a9a9a" strokeWidth={1.4} />
            <HelpBadge />
          </RibbonHelp>
        </TabRow>
        <Ribbon>
          <Group $w={300}>
            <GroupBody>
              <LargeButton $w={86} $dim>
                <LargeIcon><Pin s={26} c="#b3c0d2" /></LargeIcon>
                <LargeLine>Pin to Quick</LargeLine>
                <LargeLine>access</LargeLine>
              </LargeButton>
              <LargeButton $w={38}>
                <LargeIcon><Copy2 /></LargeIcon>
                <LargeLine>Copy</LargeLine>
              </LargeButton>
              <LargeButton $w={62} $dim>
                <LargeIcon><Clipboard /></LargeIcon>
                <LargeLine>Paste</LargeLine>
              </LargeButton>
              <SmallColumn>
                <SmallRow $gap={6}><SmallIcon $w={15}><Scissors /></SmallIcon>Cut</SmallRow>
                <SmallRow $gap={6}><SmallIcon $w={15}><CopyPath /></SmallIcon>Copy path</SmallRow>
                <SmallRow $gap={6} $dim><SmallIcon $w={15}><PasteShortcut /></SmallIcon>Paste shortcut</SmallRow>
              </SmallColumn>
            </GroupBody>
            <GroupLabel>Clipboard</GroupLabel>
          </Group>
          <Group $w={222}>
            <GroupBody>
              <LargeButton $w={59}>
                <LargeIcon><MoveTo /></LargeIcon>
                <LargeLine>Move</LargeLine>
                <LargeLine>to <Caret /></LargeLine>
              </LargeButton>
              <LargeButton $w={40}>
                <LargeIcon><CopyTo /></LargeIcon>
                <LargeLine>Copy</LargeLine>
                <LargeLine>to <Caret /></LargeLine>
              </LargeButton>
              <GroupDivider />
              <LargeButton $w={54}>
                <LargeIcon><DeleteX /></LargeIcon>
                <LargeLine>Delete</LargeLine>
                <LargeLine><Caret /></LargeLine>
              </LargeButton>
              <LargeButton $w={48}>
                <LargeIcon><RenameIcon /></LargeIcon>
                <LargeLine>Rename</LargeLine>
              </LargeButton>
            </GroupBody>
            <GroupLabel>Organize</GroupLabel>
          </Group>
          <Group $w={171}>
            <GroupBody>
              <LargeButton $w={56}>
                <LargeIcon><QuickFolder s={24} h={32} /></LargeIcon>
                <LargeLine>New</LargeLine>
                <LargeLine>folder</LargeLine>
              </LargeButton>
              <SmallColumn>
                <SmallRow><SmallIcon $w={20}><NewItemIcon /></SmallIcon>New item <Caret /></SmallRow>
                <SmallRow><SmallIcon $w={20}><EasyAccess /></SmallIcon>Easy access <Caret /></SmallRow>
              </SmallColumn>
            </GroupBody>
            <GroupLabel>New</GroupLabel>
          </Group>
          <Group $w={151}>
            <GroupBody>
              <LargeButton $w={74}>
                <LargeIcon><CheckDoc w={29} h={36} /></LargeIcon>
                <LargeLine>Properties</LargeLine>
                <LargeLine><Caret /></LargeLine>
              </LargeButton>
              <SmallColumn>
                <SmallRow $h={27}><SmallIcon $w={17}><OpenIcon /></SmallIcon>Open <Caret /></SmallRow>
                <SmallRow $h={27} $dim><SmallIcon $w={17}><EditIcon /></SmallIcon>Edit</SmallRow>
                <SmallRow $h={27}><SmallIcon $w={17}><HistoryIcon /></SmallIcon>History</SmallRow>
              </SmallColumn>
            </GroupBody>
            <GroupLabel>Open</GroupLabel>
          </Group>
          <Group $w={129}>
            <GroupBody>
              <SmallColumn $pl={9}>
                <SmallRow $gap={2}><SmallIcon $w={20}><GridIcon mode="all" /></SmallIcon>Select all</SmallRow>
                <SmallRow $gap={2}><SmallIcon $w={20}><GridIcon mode="none" /></SmallIcon>Select none</SmallRow>
                <SmallRow $gap={2}><SmallIcon $w={20}><GridIcon mode="invert" /></SmallIcon>Invert selection</SmallRow>
              </SmallColumn>
            </GroupBody>
            <GroupLabel>Select</GroupLabel>
          </Group>
        </Ribbon>
        <AddressRow>
          <NavArrow $w={46} $color="#d0d0d0"><ArrowLeft size={16} strokeWidth={1.6} /></NavArrow>
          <NavArrow $w={32} $color="#d0d0d0"><ArrowRight size={16} strokeWidth={1.6} /></NavArrow>
          <NavArrow $w={28} $color="#d0d0d0"><ChevronDown size={12} strokeWidth={1.6} /></NavArrow>
          <NavArrow $w={24} $color="#6b6b6b"><ArrowUp size={17} strokeWidth={1.8} /></NavArrow>
          <AddressBox>
            <BlueDown />
            {crumbs.map((c) => (
              <React.Fragment key={c.id}>
                <ChevronRight size={11} color="#777" strokeWidth={1.8} />
                <span>{c.text}</span>
              </React.Fragment>
            ))}
            <AddressEnd>
              <ChevronDown size={15} color="#555" strokeWidth={1.6} />
              <RefreshSlot><RotateCw size={16} strokeWidth={1.8} /></RefreshSlot>
            </AddressEnd>
          </AddressBox>
          <SearchBox>
            Search Downloads
            <Search size={15} color="#555" strokeWidth={2} style={{ transform: "scaleX(-1)" }} />
          </SearchBox>
        </AddressRow>
        <Main>
          <NavPane>
            {navItems.map((n, i) => (
              <NavRow key={i}>
                <NavIcon>{n.icon}</NavIcon>
                {n.label}
                {n.pin && <PinSlot><Pin s={14} /></PinSlot>}
              </NavRow>
            ))}
            <NavRow $outer>
              <NavIcon $outer><CreativeCloud /></NavIcon>
              Creative Cloud Files
            </NavRow>
          </NavPane>
          <Scrollbar $thumbTop={72} $thumbH={400}><ChevronUp size={13} strokeWidth={2.4} /></Scrollbar>
          <ListPane>
            <HeaderRow>
              <HeaderCell $w={342} $pl={23}>Name</HeaderCell>
              <HeaderCell $w={180} $pl={7}>
                <SortChevron><ChevronDown size={12} strokeWidth={1.4} /></SortChevron>
                Date modified
              </HeaderCell>
              <HeaderCell $w={150} $pl={7}>Type</HeaderCell>
              <HeaderCell $w={100} $pl={7}>Size</HeaderCell>
            </HeaderRow>
            <Groups>
              {fileGroups.map((g) => (
                <React.Fragment key={g.title}>
                  <GroupHeader>
                    <GroupChevron><ChevronDown size={13} strokeWidth={1.4} /></GroupChevron>
                    {g.title}
                    <GroupRule />
                  </GroupHeader>
                  {g.files.map((f) => (
                    <FileRow key={f.name} $selected={f.selected}>
                      <NameCell><FileIconSlot>{f.icon}</FileIconSlot>{f.name}</NameCell>
                      <MutedCell>{f.date}</MutedCell>
                      <MutedCell>{f.type}</MutedCell>
                      <SizeCell>{f.size}</SizeCell>
                    </FileRow>
                  ))}
                </React.Fragment>
              ))}
            </Groups>
            <Highlight width="79" height="43" viewBox="0 0 79 43">
              <path d="M15 2C30-1 60-1 73 1c5 2 6 9 5 19 0 10-1 18-2 20-21 1-41 2-58 3C8 42 1 38 0 32 0 24 4 8 15 2z" fill="#ffff00" />
            </Highlight>
          </ListPane>
          <Scrollbar $thumbTop={21} $thumbH={202}><ChevronUp size={13} strokeWidth={2.4} /></Scrollbar>
        </Main>
      </Window>
    </Page>
  );
}
